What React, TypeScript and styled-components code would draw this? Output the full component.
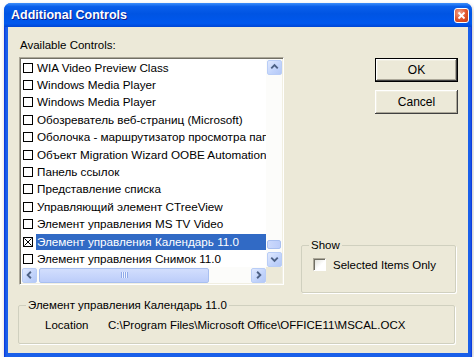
import styled, { createGlobalStyle } from "styled-components"

const GlobalStyle = createGlobalStyle`
  html, body {
    margin: 0;
    padding: 0;
    background: #fff;
  }
  body {
    font-family: "Liberation Sans", Arial, sans-serif;
    font-size: 11.5px;
    color: #000;
  }
`

const controls = [
  "WIA Video Preview Class",
  "Windows Media Player",
  "Windows Media Player",
  "Обозреватель веб-страниц (Microsoft)",
  "Оболочка - маршрутизатор просмотра папок",
  "Объект Migration Wizard OOBE Automation",
  "Панель ссылок",
  "Представление списка",
  "Управляющий элемент CTreeView",
  "Элемент управления MS TV Video",
  "Элемент управления Календарь 11.0",
  "Элемент управления Снимок 11.0",
]
const selectedIndex = 10

const Page = styled.div`
  padding: 3px 0 0 4px;
`

const Window = styled.div`
  width: 468px;
  height: 354px;
  display: flex;
  flex-direction: column;
  border-radius: 7px 7px 0 0;
  background: linear-gradient(to right, #0831d9, #1a5fe9 2px, #1a5fe9 calc(100% - 2px), #0831d9);
  box-shadow: 1px 2px 4px rgba(0, 0, 0, 0.25);
  overflow: hidden;
`

const TitleBar = styled.div`
  height: 24px;
  flex: none;
  display: flex;
  align-items: center;
  padding: 0 3px 0 7px;
  background: linear-gradient(
    to bottom,
    #3d8ffb 0%,
    #0a5fea 15%,
    #0054e3 45%,
    #0058ee 85%,
    #0046d4 100%
  );
`

const Title = styled.span`
  flex: 1;
  color: #fff;
  font-weight: bold;
  font-size: 12.5px;
  text-shadow: 1px 1px #0f1a89;
`

const CloseButton = styled.div`
  width: 13px;
  height: 13px;
  border: 1px solid #fff;
  border-radius: 3px;
  margin-top: 1px;
  display: flex;
  align-items: center;
  justify-content: center;
  background: radial-gradient(circle at 35% 30%, #f3a58c, #e0532a 55%, #c23c14);
`

const Client = styled.div`
  flex: 1;
  margin: 0 4px 4px 4px;
  padding: 11px 10px 0 11px;
  background: #ece9d8;
  display: flex;
  flex-direction: column;
`

const TopRow = styled.div`
  display: flex;
  align-items: flex-start;
  gap: 17px;
`

const LeftCol = styled.div`
  width: 265px;
  display: flex;
  flex-direction: column;
`

const Label = styled.div`
  height: 14px;
  line-height: 14px;
  padding-left: 1px;
  margin-bottom: 5px;
`

const ListBox = styled.div`
  box-sizing: border-box;
  width: 265px;
  height: 228px;
  border: 1px solid;
  border-color: #aca899 #fff #fff #aca899;
  box-shadow: inset 1px 1px #716f64, inset -1px -1px #f1efe2;
  padding: 1px;
  display: grid;
  grid-template-columns: 1fr 16px;
  grid-template-rows: 1fr 16px;
  background: #fff;
`

const Items = styled.div`
  overflow: hidden;
  white-space: nowrap;
  font-size: 11.7px;
`

const Row = styled.div`
  height: 17.4px;
  display: flex;
  align-items: center;
  padding-left: 2px;
`

const Box = styled.span`
  box-sizing: border-box;
  flex: none;
  width: 10px;
  height: 10px;
  border: 1px solid #000;
  margin-right: 3px;
  display: flex;
  align-items: center;
  justify-content: center;
  background: #fff;
`

const ItemText = styled.span<{ $selected?: boolean }>`
  flex: 1;
  height: 16px;
  line-height: 16px;
  padding-left: 1px;
  background: ${(p) => (p.$selected ? "#316ac5" : "transparent")};
  color: ${(p) => (p.$selected ? "#fff" : "#000")};
`

const VScroll = styled.div`
  display: flex;
  flex-direction: column;
  background: #fcfcfa;
`

const HScroll = styled.div`
  display: flex;
  align-items: center;
  background: #fcfcfa;
`

const Corner = styled.div`
  background: #ece9d8;
`

const ArrowButton = styled.div`
  box-sizing: border-box;
  flex: none;
  width: 15px;
  height: 15px;
  margin: 0.5px;
  border: 1px solid #b9cdf6;
  border-radius: 2px;
  background: linear-gradient(to bottom right, #e0e9fe, #c1d3fb 60%, #b4c8f6);
  display: flex;
  align-items: center;
  justify-content: center;
`

const VTrack = styled.div`
  flex: 1;
  display: flex;
  flex-direction: column;
`

const VThumb = styled.div`
  box-sizing: border-box;
  margin: auto 1px 2px 1px;
  height: 9px;
  border: 1px solid #a8bff0;
  border-radius: 2px;
  background: linear-gradient(to right, #cbd9fc, #bccdfa);
`

const HTrack = styled.div`
  flex: 1;
  align-self: stretch;
  display: flex;
  align-items: center;
`

const HThumb = styled.div`
  box-sizing: border-box;
  width: 170px;
  height: 15px;
  margin-left: 2px;
  border: 1px solid #a8bff0;
  border-radius: 2px;
  background: linear-gradient(to bottom, #d2defd, #bccdfa);
  display: flex;
  align-items: center;
  justify-content: center;
`

const Grip = styled.div`
  width: 7px;
  height: 6px;
  background: repeating-linear-gradient(to right, #8faaea 0 1px, #eef3ff 1px 2px);
`

const RightCol = styled.div`
  width: 157px;
  padding-top: 20px;
  display: flex;
  flex-direction: column;
  align-items: flex-end;
`

const Button = styled.button<{ $default?: boolean }>`
  box-sizing: border-box;
  width: 83px;
  height: 24px;
  padding: 0;
  font: inherit;
  font-size: 12px;
  color: #000;
  background: #ece9d8;
  border: ${(p) => (p.$default ? "1px solid #000" : "none")};
  box-shadow: inset -1px -1px #404040, inset 1px 1px #fff, inset -2px -2px #aca899,
    inset 2px 2px #f1efe2;
  & + & {
    margin-top: 8px;
  }
`

const Group = styled.fieldset<{ $width: number; $height: number }>`
  box-sizing: border-box;
  width: ${(p) => p.$width}px;
  height: ${(p) => p.$height}px;
  margin: 0;
  padding: 0;
  border: 1px solid #d0d0bf;
  border-radius: 2px;
  box-shadow: 1px 1px #fff;
  min-width: 0;
`

const Legend = styled.legend`
  margin-left: 7px;
  padding: 0 2px;
  line-height: 14px;
`

const ShowGroup = styled(Group)`
  align-self: flex-start;
  margin-top: 124px;
`

const CheckRow = styled.label`
  display: flex;
  align-items: center;
  gap: 7px;
  padding: 6px 0 0 11px;
`

const CheckBox = styled.span`
  box-sizing: border-box;
  width: 13px;
  height: 13px;
  border: 1px solid;
  border-color: #aca899 #fff #fff #aca899;
  box-shadow: inset 1px 1px #716f64;
  background: linear-gradient(to bottom right, #dcdcd4, #fff 60%);
`

const InfoGroup = styled(Group)`
  margin: 5px 0 0 -1px;
`

const InfoRow = styled.div`
  display: flex;
  padding: 7px 0 0 26px;
`

const InfoKey = styled.span`
  width: 63px;
`

const Chevron = ({ dir }: { dir: "up" | "down" | "left" | "right" }) => {
  const pts = {
    up: "3.5,8.5 7,5 10.5,8.5",
    down: "3.5,5.5 7,9 10.5,5.5",
    left: "8.5,3.5 5,7 8.5,10.5",
    right: "5.5,3.5 9,7 5.5,10.5",
  }[dir]
  return (
    <svg width="14" height="14" viewBox="0 0 14 14">
      <polyline points={pts} fill="none" stroke="#4d6185" strokeWidth="2" />
    </svg>
  )
}

export default function App() {
  return (
    <>
      <GlobalStyle />
      <Page>
        <Window>
          <TitleBar>
            <Title>Additional Controls</Title>
            <CloseButton>
              <svg width="9" height="9" viewBox="0 0 9 9">
                <path d="M1.5 1.5 L7.5 7.5 M7.5 1.5 L1.5 7.5" stroke="#fff" strokeWidth="1.8" />
              </svg>
            </CloseButton>
          </TitleBar>
          <Client>
            <TopRow>
              <LeftCol>
                <Label>Available Controls:</Label>
                <ListBox>
                  <Items>
                    {controls.map((name, i) => (
                      <Row key={i}>
                        <Box>
                          {i === selectedIndex && (
                            <svg width="8" height="8" viewBox="0 0 8 8">
                              <path d="M0.5 0.5 L7.5 7.5 M7.5 0.5 L0.5 7.5" stroke="#000" strokeWidth="1" />
                            </svg>
                          )}
                        </Box>
                        <ItemText $selected={i === selectedIndex}>{name}</ItemText>
                      </Row>
                    ))}
                  </Items>
                  <VScroll>
                    <ArrowButton>
                      <Chevron dir="up" />
                    </ArrowButton>
                    <VTrack>
                      <VThumb />
                    </VTrack>
                    <ArrowButton>
                      <Chevron dir="down" />
                    </ArrowButton>
                  </VScroll>
                  <HScroll>
                    <ArrowButton>
                      <Chevron dir="left" />
                    </ArrowButton>
                    <HTrack>
                      <HThumb>
                        <Grip />
                      </HThumb>
                    </HTrack>
                    <ArrowButton>
                      <Chevron dir="right" />
                    </ArrowButton>
                  </HScroll>
                  <Corner />
                </ListBox>
              </LeftCol>
              <RightCol>
                <Button $default>OK</Button>
                <Button>Cancel</Button>
                <ShowGroup $width={155} $height={55}>
                  <Legend>Show</Legend>
                  <CheckRow>
                    <CheckBox />
                    Selected Items Only
                  </CheckRow>
                </ShowGroup>
              </RightCol>
            </TopRow>
            <InfoGroup $width={437} $height={46}>
              <Legend>Элемент управления Календарь 11.0</Legend>
              <InfoRow>
                <InfoKey>Location</InfoKey>
                <span>C:\Program Files\Microsoft Office\OFFICE11\MSCAL.OCX</span>
              </InfoRow>
            </InfoGroup>
          </Client>
        </Window>
      </Page>
    </>
  )
}
